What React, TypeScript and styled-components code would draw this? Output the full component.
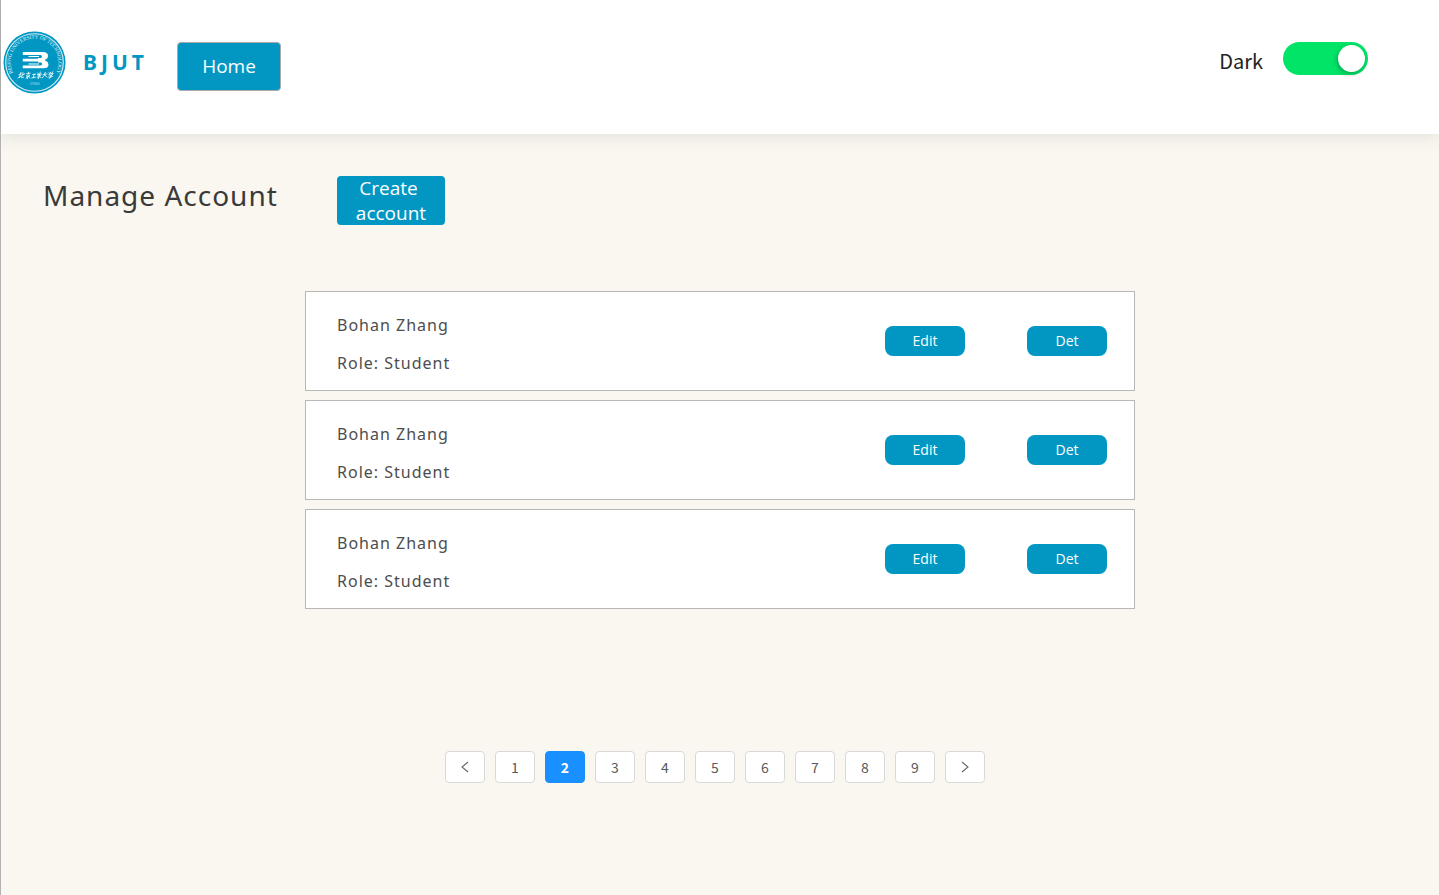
import React, { useState } from "react";
import styled, { createGlobalStyle, css } from "styled-components";

const brand = "#0297c3";
const uiFont = `"Open Sans", "Noto Sans", sans-serif`;
const headingFont = `"Noto Sans", "Open Sans", sans-serif`;
const cjkFont = `"Noto Sans CJK SC", "Noto Sans", sans-serif`;

const GlobalStyle = createGlobalStyle`
  *, *::before, *::after { box-sizing: border-box; }
  body { margin: 0; background: #faf7f0; font-family: ${headingFont}; }
`;

const Page = styled.div`
  min-height: 100vh;
  border-left: 1px solid #b4b4b4;
  display: flex;
  flex-direction: column;
`;

const Header = styled.header`
  display: flex;
  justify-content: space-between;
  align-items: flex-start;
  padding: 30px 71px 39px 1px;
  background: #fff;
  box-shadow: 0 2px 16px rgba(60, 80, 80, 0.14);
`;

const Brand = styled.div`
  display: flex;
  align-items: center;
  color: ${brand};
`;

const BrandName = styled.span`
  margin-left: 16px;
  padding-bottom: 2px;
  width: 94px;
  font: 700 21px/32px ${headingFont};
  letter-spacing: 4px;
`;

const Nav = styled.nav`
  padding-top: 12px;
`;

const HeaderLeft = styled.div`
  display: flex;
  align-items: flex-start;
  min-height: 65px;
`;

const PrimaryButton = styled.button<{ $outlined?: boolean }>`
  padding: 0;
  border: ${(p) => (p.$outlined ? "1px solid #aaaaaa" : "0")};
  border-radius: 4px;
  background: ${brand};
  color: #fff;
  width: ${(p) => (p.$outlined ? "104px" : "108px")};
  height: 49px;
  font: 400 19px/25px ${uiFont};
  cursor: pointer;
`;

const ThemeControl = styled.div`
  display: flex;
  align-items: flex-start;
  gap: 20px;
  padding-top: 12px;
`;

const ThemeLabel = styled.label`
  font: 400 20px/38px ${cjkFont};
  color: #222;
`;

const Switch = styled.input`
  appearance: none;
  margin: 0;
  width: 85px;
  height: 33px;
  padding: 3px;
  border-radius: 17px;
  background: #b8b8b8;
  display: flex;
  cursor: pointer;

  &::before {
    content: "";
    width: 27px;
    height: 27px;
    border-radius: 50%;
    background: #fff;
    box-shadow: -1px 2px 5px rgba(0, 60, 30, 0.35);
  }

  &:checked {
    background: #00e468;
    justify-content: flex-end;
  }
`;

const Main = styled.main`
  display: flex;
  flex-direction: column;
  align-items: center;
  padding-top: 42px;
`;

const TitleRow = styled.div`
  align-self: stretch;
  display: flex;
  align-items: flex-start;
  padding-left: 42px;
`;

const Title = styled.h1`
  margin: 0;
  width: 294px;
  font: 400 28px/38px ${headingFont};
  letter-spacing: 1px;
  color: #3a3a3a;
  white-space: nowrap;
`;

const AccountList = styled.ul`
  list-style: none;
  margin: 66px 0 0;
  padding: 0;
  width: 100%;
  max-width: 830px;
  display: grid;
  gap: 9px;
`;

const AccountCard = styled.li`
  display: flex;
  align-items: center;
  height: 100px;
  padding: 0 27px 0 31px;
  border: 1px solid #b8b8b8;
  background: #fff;
`;

const AccountInfo = styled.div`
  flex: 1;
  padding-top: 6px;
  font: 400 16px/38px ${headingFont};
  letter-spacing: 1px;
  color: #4d4d4d;

  p { margin: 0; }
`;

const CardActions = styled.div`
  display: flex;
  gap: 62px;
`;

const SmallButton = styled.button`
  width: 80px;
  height: 30px;
  padding: 0;
  border: 0;
  border-radius: 8px;
  background: ${brand};
  color: #fff;
  font: 500 14px/20px ${uiFont};
  cursor: pointer;
`;

const Pagination = styled.nav`
  display: flex;
  gap: 10px;
  margin: 142px 10px 0 0;
`;

const PageButton = styled.button<{ $active?: boolean }>`
  display: flex;
  align-items: center;
  justify-content: center;
  width: 40px;
  height: 32px;
  padding: 0;
  border: 1px solid #d9d9d9;
  border-radius: 4px;
  background: #fff;
  color: #595959;
  font: 400 14px/22px ${cjkFont};
  cursor: pointer;

  ${(p) =>
    p.$active &&
    css`
      border-color: #1890ff;
      background: #1890ff;
      color: #fff;
      font-weight: 700;
    `}
`;

function Seal() {
  return (
    <svg width="65" height="65" viewBox="0 0 65 65" role="img" aria-label="Beijing University of Technology">
      <defs>
        <path id="seal-arc" d="M11.2 43.3 A23.9 23.9 0 1 1 53.8 43.3" />
      </defs>
      <circle cx="32.5" cy="32.5" r="31" fill={brand} />
      <circle cx="32.5" cy="32.5" r="28.8" fill="none" stroke="#d8edf3" strokeWidth="1.1" />
      <text fill="#e4f4f9" fontFamily="Liberation Serif, serif" fontSize="5.2">
        <textPath href="#seal-arc" startOffset="50%" textAnchor="middle">
          BEIJING UNIVERSITY OF TECHNOLOGY
        </textPath>
      </text>
      <g fill="#fff">
        <path d="M20.8 22.1H40.5Q46 22.1 46 26.1Q46 28.5 43.8 29.6H36V28H38.5Q40 28 40 26.5Q40 25 38.5 25H20.8Z" />
        <path d="M20.8 32.6H38.5Q40.2 32.6 40.2 34Q40.2 35.4 38.5 35.4H20.8V38.2H41.2Q46.5 38.2 46.5 34.7Q46.5 32 43.8 30.8H36V32.6Z" />
        <path d="M26.5 26H37V27H26.5ZM26.5 33.4H37V34.4H26.5ZM20.8 28.8H43V31.4H20.8Z" />
      </g>
      <g fill="none" stroke="#fff" strokeWidth="0.8" strokeLinecap="round" strokeLinejoin="round">
        <path d="M17 44.5l2.2-.5M19 42.3l-1.6 5.2M16 48l3-1.7M21 42.6l-1.5 5q1.3.4 2.3-.5M20.7 45l2-1.2" />
        <path d="M24.5 43.8l3.6-.7M26.5 42.2v1M24.8 45.3l2.8-.4-.5 1.6-2.5.2M26 46.5l-.5 2.2M24 48.2l1-.7M27.4 47.2l.8.8" />
        <path d="M30.7 44.5l3-.4M32.2 44.3l-1 3.2M29.8 48l4-.8" />
        <path d="M36 43l.5 1.2M38.3 42l-.4 2M35.4 44.6l4-.7M35.8 46l3-.6M37.5 44.5l-1 4M35.2 48.2l1.5-1.4M37.5 46.7l1.8 1" />
        <path d="M41 44.7l4-.8M43.3 42.4q-.5 3.5-2.8 5.4M43 45.1l2 2.2" />
        <path d="M47 42.7l.5.8M48.6 42.2v1M50.8 41.7l-1 1.6M46.7 45l.6-.9 3.9-.6-.7 1M47.8 45.5l2-.4-1 1.2q.5 1.3-1.5 2.1M46.6 47.2l4-.8" />
      </g>
      <text x="32.5" y="55" fill="#b5dfec" fontFamily="Liberation Serif, serif" fontSize="5" textAnchor="middle">
        1960
      </text>
    </svg>
  );
}

function Chevron({ d }: { d: string }) {
  return (
    <svg width="14" height="14" viewBox="0 0 14 14" fill="none" stroke="#666" strokeWidth="1.1" aria-hidden="true">
      <path d={d} />
    </svg>
  );
}

const accounts = [
  { id: 1, name: "Bohan Zhang", role: "Student" },
  { id: 2, name: "Bohan Zhang", role: "Student" },
  { id: 3, name: "Bohan Zhang", role: "Student" },
];

const pages = [1, 2, 3, 4, 5, 6, 7, 8, 9];

export default function App() {
  const [page, setPage] = useState(2);

  return (
    <Page>
      <GlobalStyle />
      <Header>
        <HeaderLeft>
          <Brand>
            <Seal />
            <BrandName>BJUT</BrandName>
          </Brand>
          <Nav>
            <PrimaryButton $outlined type="button">Home</PrimaryButton>
          </Nav>
        </HeaderLeft>
        <ThemeControl>
          <ThemeLabel htmlFor="theme">Dark</ThemeLabel>
          <Switch id="theme" type="checkbox" role="switch" defaultChecked />
        </ThemeControl>
      </Header>
      <Main>
        <TitleRow>
          <Title>Manage Account</Title>
          <PrimaryButton type="button">
            Create&nbsp;
            <br />
            account
          </PrimaryButton>
        </TitleRow>
        <AccountList>
          {accounts.map((account) => (
            <AccountCard key={account.id}>
              <AccountInfo>
                <p>{account.name}</p>
                <p>Role: {account.role}</p>
              </AccountInfo>
              <CardActions>
                <SmallButton type="button">Edit</SmallButton>
                <SmallButton type="button">Det</SmallButton>
              </CardActions>
            </AccountCard>
          ))}
        </AccountList>
        <Pagination aria-label="Pagination">
          <PageButton type="button" aria-label="Previous page" onClick={() => setPage(Math.max(1, page - 1))}>
            <Chevron d="M10 2L4 7L10 12" />
          </PageButton>
          {pages.map((n) => (
            <PageButton
              key={n}
              type="button"
              $active={n === page}
              aria-current={n === page ? "page" : undefined}
              onClick={() => setPage(n)}
            >
              {n}
            </PageButton>
          ))}
          <PageButton type="button" aria-label="Next page" onClick={() => setPage(Math.min(9, page + 1))}>
            <Chevron d="M4 2L10 7L4 12" />
          </PageButton>
        </Pagination>
      </Main>
    </Page>
  );
}
